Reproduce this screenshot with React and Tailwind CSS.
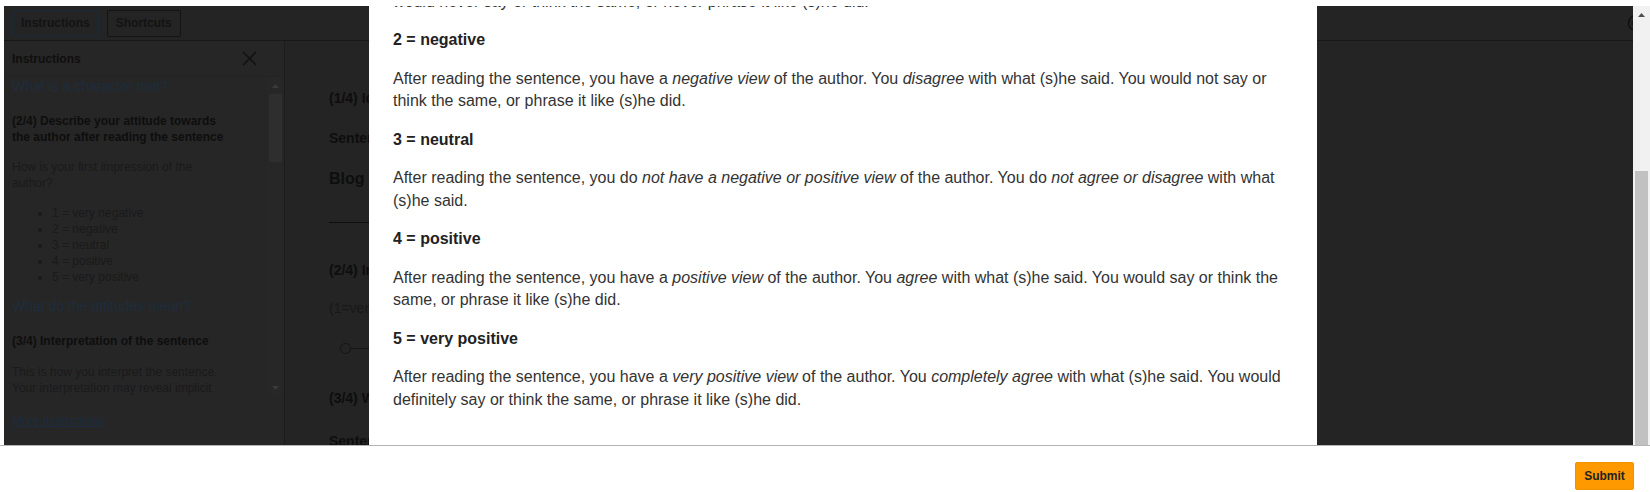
const Tri = ({ up = true, color = '#505050' }) => (
  <svg width="7" height="4" viewBox="0 0 7 4" className="block">
    <path d={up ? 'M0 4 L3.5 0 L7 4 Z' : 'M0 0 L3.5 4 L7 0 Z'} fill={color} />
  </svg>
);

const levels = [
  {
    title: '2 = negative',
    body: (
      <>
        After reading the sentence, you have a <em>negative view</em> of the author. You <em>disagree</em> with what
        (s)he said. You would not say or think the same, or phrase it like (s)he did.
      </>
    ),
  },
  {
    title: '3 = neutral',
    body: (
      <>
        After reading the sentence, you do <em>not have a negative or positive view</em> of the author. You do{' '}
        <em>not agree or disagree</em> with what (s)he said.
      </>
    ),
  },
  {
    title: '4 = positive',
    body: (
      <>
        After reading the sentence, you have a <em>positive view</em> of the author. You <em>agree</em> with what
        (s)he said. You would say or think the same, or phrase it like (s)he did.
      </>
    ),
  },
  {
    title: '5 = very positive',
    body: (
      <>
        After reading the sentence, you have a <em>very positive view</em> of the author. You{' '}
        <em>completely agree</em> with what (s)he said. You would definitely say or think the same, or phrase it
        like (s)he did.
      </>
    ),
  },
];

const Sidebar = () => (
  <aside className="w-[281px] shrink-0 bg-[#262626] border-r border-[#1c1c1c] flex flex-col">
    <div className="h-[36px] shrink-0 flex items-center justify-between pl-[8px] pr-[27px] border-b border-[#232323]">
      <span className="text-[12px] font-bold text-[#0f0f0f]">Instructions</span>
      <svg width="15" height="15" viewBox="0 0 15 15">
        <path d="M1 1 L14 14 M14 1 L1 14" stroke="#111" strokeWidth="1.6" />
      </svg>
    </div>
    <div className="h-[319px] shrink-0 flex overflow-hidden">
      <div className="flex-1 pl-[8px] pr-[34px] flex flex-col text-[12px] leading-[16px] text-[#1a1a1a]">
        <p className="text-[14px] leading-[18px] text-[#1e2d3d]">What is a character trait?</p>
        <p className="mt-[18px] font-bold text-[#0e0e0e]">(2/4) Describe your attitude towards the author after reading the sentence</p>
        <p className="mt-[14px]">How is your first impression of the author?</p>
        <ul className="mt-[14px] list-disc pl-[40px] marker:text-[#1a1a1a]">
          <li>1 = very negative</li>
          <li>2 = negative</li>
          <li>3 = neutral</li>
          <li>4 = positive</li>
          <li>5 = very positive</li>
        </ul>
        <p className="mt-[12px] text-[14px] leading-[18px] text-[#1e2d3d]">What do the attitudes mean?</p>
        <p className="mt-[18px] font-bold text-[#0e0e0e]">(3/4) Interpretation of the sentence</p>
        <p className="mt-[15px]">This is how you interpret the sentence. Your interpretation may reveal implicit meanings.</p>
      </div>
      <div className="w-[14px] mr-[2px] shrink-0 bg-[#272727] flex flex-col items-center">
        <div className="h-[17px] flex items-center"><Tri color="#3a3a3a" /></div>
        <div className="w-[13px] h-[68px] bg-[#2e2e2e]" />
        <div className="flex-1" />
        <div className="h-[17px] flex items-center"><Tri up={false} color="#3a3a3a" /></div>
      </div>
    </div>
    <div className="pl-[8px] pt-[17px] text-[12px] leading-[16px]">
      <span className="underline text-[#1c2c3e]">More Instructions</span>
    </div>
  </aside>
);

const MainBehind = () => (
  <main className="flex-1 pl-[44px] pt-[47px] flex flex-col text-[14px] leading-[20px] text-[#0e0e0e] overflow-hidden">
    <p className="shrink-0 font-bold whitespace-nowrap">(1/4) Identify the character traits of the author</p>
    <p className="shrink-0 mt-[20px] font-bold whitespace-nowrap">Sentence:</p>
    <p className="shrink-0 mt-[20px] text-[16px] leading-[22px] font-bold whitespace-nowrap">Blog post</p>
    <div className="shrink-0 mt-[32px] h-px w-[900px] bg-[#0e0e0e]" />
    <p className="shrink-0 mt-[37px] font-bold whitespace-nowrap">(2/4) Indicate your attitude towards the author</p>
    <p className="shrink-0 mt-[18px] text-[#181818] whitespace-nowrap">(1=very negative, 5=very positive)</p>
    <div className="shrink-0 mt-[25px] ml-[11px] flex items-center w-[400px]">
      <div className="w-[11px] h-[11px] rounded-full border border-[#151515]" />
      <div className="flex-1 h-px bg-[#151515]" />
    </div>
    <p className="shrink-0 mt-[34px] font-bold whitespace-nowrap">(3/4) What is your interpretation?</p>
    <p className="shrink-0 mt-[23px] font-bold whitespace-nowrap">Sentence:</p>
  </main>
);

const Modal = () => (
  <div className="absolute left-[365px] top-0 w-[948px] h-full bg-white overflow-hidden">
    <div className="-mt-[38px] px-[24px] flex flex-col gap-4 text-[16px] leading-[22.5px] text-[#333]">
      <p>
        After reading the sentence, you have a <em>very negative view</em> of the author. You{' '}
        <em>completely disagree</em> with what (s)he said. You would never say or think the same, or never phrase it
        like (s)he did.
      </p>
      {levels.map((l) => (
        <div key={l.title} className="flex flex-col gap-4">
          <h4 className="font-bold text-[#222]">{l.title}</h4>
          <p>{l.body}</p>
        </div>
      ))}
    </div>
  </div>
);

export default function App() {
  return (
    <div className="w-[1650px] h-[492px] bg-white flex flex-col overflow-hidden font-['Liberation_Sans',Arial,sans-serif]">
      <div className="mt-[6px] ml-[4px] h-[439px] shrink-0 flex relative">
        <div className="w-[1629px] bg-[#242424] flex flex-col">
          <header className="h-[35px] shrink-0 border-b border-[#181818] flex items-center justify-between pl-[8px] overflow-hidden">
            <div className="flex gap-2">
              <button className="h-[27px] px-2 rounded-[2px] border border-[#1b2a38] text-[12px] font-bold text-[#131313]">
                Instructions
              </button>
              <button className="h-[27px] px-2 rounded-[2px] border border-[#141414] text-[12px] font-bold text-[#131313]">
                Shortcuts
              </button>
            </div>
            <svg width="18" height="18" viewBox="0 0 18 18" className="-mr-[12px]">
              <circle cx="9" cy="9" r="7.5" fill="none" stroke="#111" strokeWidth="1.6" />
              <circle cx="9" cy="9" r="3" fill="none" stroke="#111" strokeWidth="1.4" />
            </svg>
          </header>
          <div className="flex-1 flex min-h-0">
            <Sidebar />
            <MainBehind />
          </div>
        </div>
        <div className="w-[17px] shrink-0 bg-[#f1f1f1] flex flex-col">
          <div className="h-[17px] flex items-center justify-center"><Tri /></div>
          <div className="flex-1" />
          <div className="h-[274px] ml-[2px] mr-[2px] bg-[#c1c1c1]" />
        </div>
        <Modal />
      </div>
      <div className="flex-1 border-t border-[#b4b4b4] flex justify-end pt-[16px] pr-[16px]">
        <button className="w-[59px] h-[28px] rounded-[2px] bg-[#ff9900] border border-[#f29100] text-[12px] font-bold text-[#222]">
          Submit
        </button>
      </div>
    </div>
  );
}
